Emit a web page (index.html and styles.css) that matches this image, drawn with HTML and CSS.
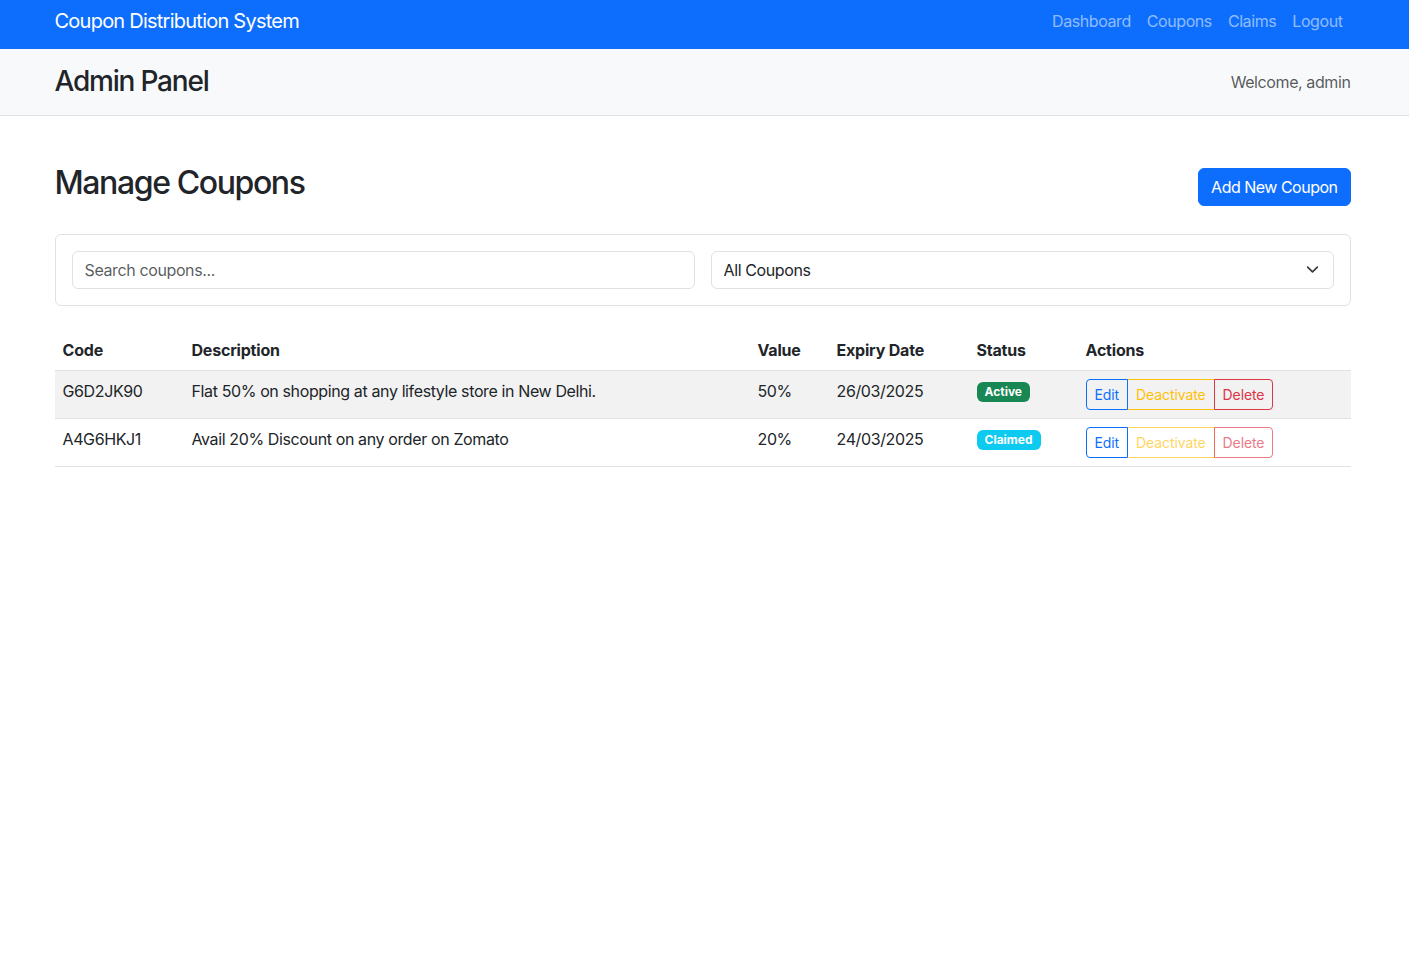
FILE: index.html
```html
<!DOCTYPE html>
<html lang="en">
<head>
<meta charset="utf-8">
<title>Coupon Distribution System</title>
<link rel="stylesheet" href="styles.css">
</head>
<body>
<nav class="navbar">
  <div class="container nav-inner">
    <a class="brand" href="#">Coupon Distribution System</a>
    <ul class="nav-links">
      <li><a href="#">Dashboard</a></li>
      <li><a href="#">Coupons</a></li>
      <li><a href="#">Claims</a></li>
      <li><a href="#">Logout</a></li>
    </ul>
  </div>
</nav>
<header class="subheader">
  <div class="container sub-inner">
    <h1 class="panel-title">Admin Panel</h1>
    <span class="welcome">Welcome, admin</span>
  </div>
</header>
<main class="container main">
  <div class="title-row">
    <h2 class="page-title">Manage Coupons</h2>
    <button class="btn btn-primary">Add New Coupon</button>
  </div>
  <div class="card">
    <div class="filter-row">
      <input class="form-control" type="text" placeholder="Search coupons...">
      <div class="select-wrap">
        <select class="form-select">
          <option>All Coupons</option>
        </select>
        <svg class="chev" width="16" height="16" viewBox="0 0 16 16"><path d="M2 5l6 6 6-6" fill="none" stroke="#343a40" stroke-width="2" stroke-linecap="round" stroke-linejoin="round"/></svg>
      </div>
    </div>
  </div>
  <table class="table">
    <colgroup>
      <col class="c-code"><col class="c-desc"><col class="c-val"><col class="c-exp"><col class="c-status"><col class="c-act">
    </colgroup>
    <thead>
      <tr><th>Code</th><th>Description</th><th>Value</th><th>Expiry Date</th><th>Status</th><th>Actions</th></tr>
    </thead>
    <tbody>
      <tr class="striped">
        <td>G6D2JK90</td>
        <td>Flat 50% on shopping at any lifestyle store in New Delhi.</td>
        <td>50%</td>
        <td>26/03/2025</td>
        <td><span class="badge badge-success">Active</span></td>
        <td>
          <div class="btn-group">
            <button class="bs b-primary">Edit</button><button class="bs b-warning">Deactivate</button><button class="bs b-danger">Delete</button>
          </div>
        </td>
      </tr>
      <tr>
        <td>A4G6HKJ1</td>
        <td>Avail 20% Discount on any order on Zomato</td>
        <td>20%</td>
        <td>24/03/2025</td>
        <td><span class="badge badge-info">Claimed</span></td>
        <td>
          <div class="btn-group">
            <button class="bs b-primary">Edit</button><button class="bs b-warning disabled">Deactivate</button><button class="bs b-danger disabled">Delete</button>
          </div>
        </td>
      </tr>
    </tbody>
  </table>
</main>
</body>
</html>
```

FILE: styles.css
```css
* { box-sizing: border-box; }
body {
  margin: 0;
  font-family: Inter, "Noto Sans", sans-serif;
  font-size: 16px;
  line-height: 1.5;
  color: #212529;
  background: #fff;
  letter-spacing: -0.38px;
}
.container {
  width: 1320px;
  margin-left: calc((100% - 1324px) / 2);
  padding: 0 12px;
}
.navbar {
  background: #0d6efd;
  height: 49px;
}
.nav-inner {
  height: 42px;
  display: flex;
  align-items: center;
  justify-content: space-between;
}
.brand {
  color: #fff;
  text-decoration: none;
  font-size: 20px;
  line-height: 30px;
  letter-spacing: -0.76px;
}
.nav-links {
  list-style: none;
  margin: 0;
  padding: 0;
  display: flex;
}
.nav-links a {
  display: block;
  padding: 8px 8px;
  color: rgba(255,255,255,0.55);
  text-decoration: none;
  line-height: 24px;
  letter-spacing: -0.42px;
}
.subheader {
  background: #f8f9fa;
  border-bottom: 1px solid #dee2e6;
  padding: 16px 0;
}
.sub-inner {
  display: flex;
  align-items: center;
  justify-content: space-between;
}
.panel-title {
  margin: 0;
  font-size: 28px;
  font-weight: 500;
  line-height: 1.2;
  letter-spacing: -1.2px;
}
.welcome {
  color: rgba(33,37,41,0.75);
  letter-spacing: -0.4px;
}
.main { padding-top: 48px; }
.title-row {
  display: flex;
  align-items: center;
  justify-content: space-between;
  margin-bottom: 24px;
}
.page-title {
  margin: 0 0 8px;
  font-size: 32px;
  font-weight: 500;
  line-height: 1.2;
  letter-spacing: -1.4px;
}
.btn {
  font-family: inherit;
  font-size: 16px;
  line-height: 24px;
  padding: 6px 12px;
  border-radius: 6px;
  border: 1px solid transparent;
  cursor: pointer;
  letter-spacing: -0.5px;
}
.btn-primary {
  background: #0d6efd;
  border-color: #0d6efd;
  color: #fff;
}
.card {
  border: 1px solid #dee2e6;
  border-radius: 6px;
  padding: 16px;
  margin-bottom: 24px;
}
.filter-row {
  display: grid;
  grid-template-columns: 1fr 1fr;
  gap: 16px;
}
.form-control, .form-select {
  display: block;
  width: 100%;
  font-family: inherit;
  font-size: 16px;
  line-height: 24px;
  padding: 6px 12px;
  border: 1px solid #dee2e6;
  border-radius: 6px;
  color: #212529;
  background: #fff;
  letter-spacing: -0.38px;
}
.form-control::placeholder { color: rgba(33,37,41,0.75); }
.select-wrap { position: relative; }
.form-select {
  appearance: none;
  -webkit-appearance: none;
  padding-right: 36px;
}
.chev {
  position: absolute;
  right: 15px;
  top: 12px;
  width: 13px;
  height: 13px;
  pointer-events: none;
}
.table {
  width: 100%;
  border-collapse: collapse;
  table-layout: fixed;
}
.c-code { width: 129px; }
.c-desc { width: 566px; }
.c-val { width: 79px; }
.c-exp { width: 140px; }
.c-status { width: 109px; }
.c-act { width: 273px; }
.table th, .table td {
  padding: 8px;
  text-align: left;
  vertical-align: top;
  border-bottom: 1px solid #dee2e6;
  line-height: 24px;
}
.table th { font-weight: 700; letter-spacing: -0.2px; }
.table tr.striped td { background: #f2f2f2; }
.badge {
  display: inline-block;
  font-size: 12px;
  font-weight: 700;
  line-height: 1;
  padding: 4px 8px;
  border-radius: 6px;
  color: #fff;
  vertical-align: 1px;
  letter-spacing: 0;
}
.badge-success { background: #198754; }
.badge-info { background: #0dcaf0; }
.btn-group { display: inline-flex; }
.bs {
  font-family: inherit;
  font-size: 14px;
  line-height: 21px;
  padding: 4px 8px;
  background: transparent;
  border: 1px solid;
  margin-left: -1px;
  cursor: pointer;
  letter-spacing: -0.1px;
}
.bs:first-child { margin-left: 0; border-radius: 4px 0 0 4px; }
.bs:last-child { border-radius: 0 4px 4px 0; }
.b-primary { color: #0d6efd; border-color: #0d6efd; position: relative; z-index: 1; }
.b-warning { color: #ffc107; border-color: #ffc107; }
.b-danger { color: #dc3545; border-color: #dc3545; }
.disabled { opacity: 0.65; cursor: default; }
```
